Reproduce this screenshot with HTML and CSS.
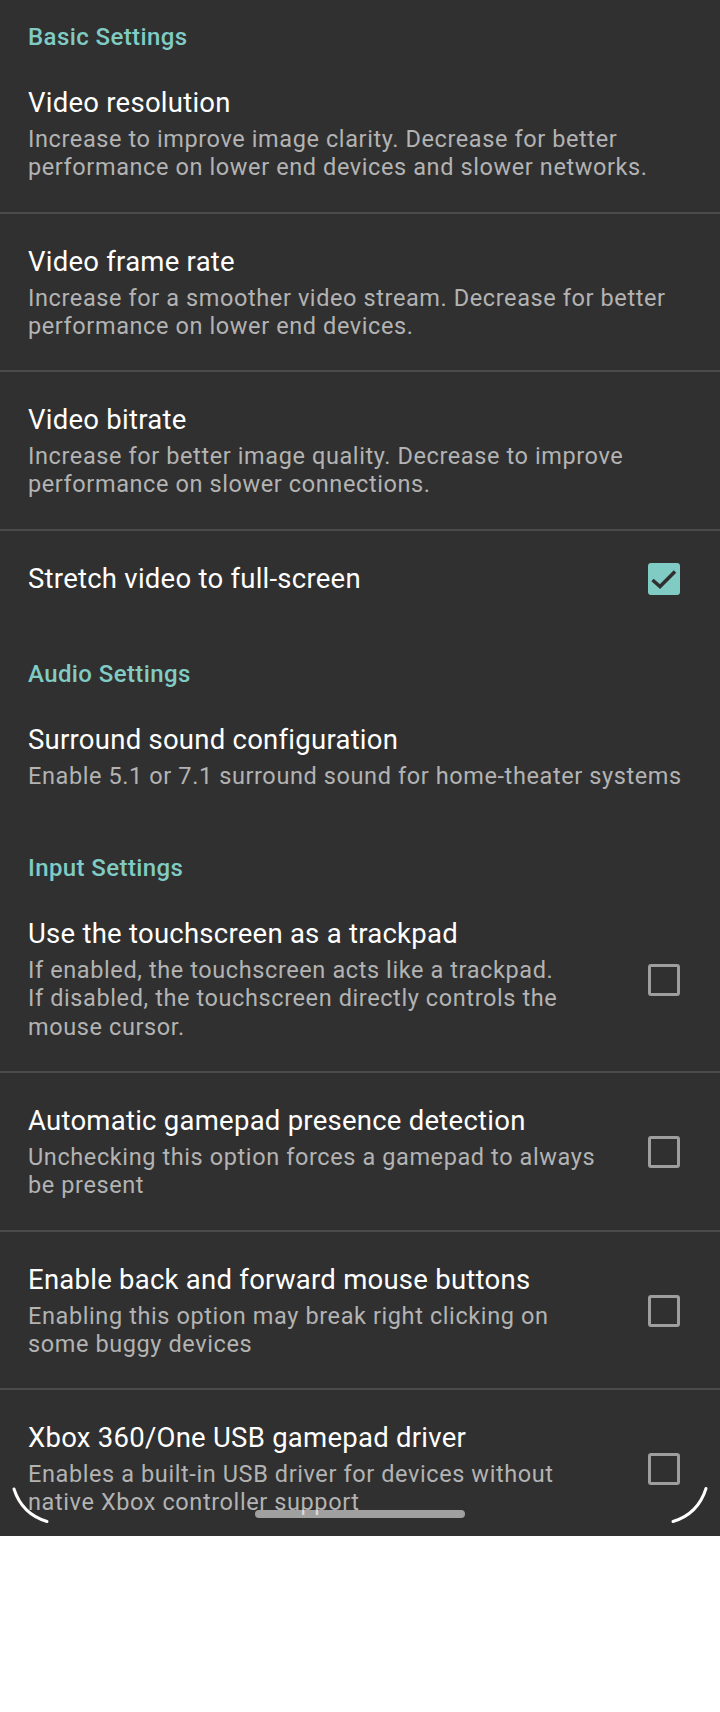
FILE: index.html
```html
<!DOCTYPE html>
<html lang="en">
<head>
<meta charset="utf-8">
<title>Settings</title>
<link rel="stylesheet" href="styles.css">
</head>
<body>
<div class="screen">
  <div class="list">
    <div class="category first">Basic Settings</div>
    <div class="group">
      <div class="pref">
        <div class="text">
          <div class="title">Video resolution</div>
          <div class="summary">Increase to improve image clarity. Decrease for better performance on lower end devices and slower networks.</div>
        </div>
      </div>
      <div class="pref">
        <div class="text">
          <div class="title">Video frame rate</div>
          <div class="summary">Increase for a smoother video stream. Decrease for better performance on lower end devices.</div>
        </div>
      </div>
      <div class="pref">
        <div class="text">
          <div class="title">Video bitrate</div>
          <div class="summary">Increase for better image quality. Decrease to improve performance on slower connections.</div>
        </div>
      </div>
      <div class="pref widget single">
        <div class="text">
          <div class="title">Stretch video to full-screen</div>
        </div>
        <svg class="check" viewBox="0 0 32 32" width="32" height="32" aria-hidden="true">
          <rect x="0" y="0" width="32" height="32" rx="3" fill="#80cbc4"/>
          <polyline points="4.5,17 12,23.5 27,8.5" fill="none" stroke="#2f2f2f" stroke-width="3.5"/>
        </svg>
      </div>
    </div>

    <div class="category">Audio Settings</div>
    <div class="group">
      <div class="pref">
        <div class="text">
          <div class="title">Surround sound configuration</div>
          <div class="summary">Enable 5.1 or 7.1 surround sound for home-theater systems</div>
        </div>
      </div>
    </div>

    <div class="category">Input Settings</div>
    <div class="group">
      <div class="pref widget">
        <div class="text">
          <div class="title">Use the touchscreen as a trackpad</div>
          <div class="summary">If enabled, the touchscreen acts like a trackpad.<br>If disabled, the touchscreen directly controls the mouse cursor.</div>
        </div>
        <div class="box"></div>
      </div>
      <div class="pref widget">
        <div class="text">
          <div class="title">Automatic gamepad presence detection</div>
          <div class="summary">Unchecking this option forces a gamepad to always be present</div>
        </div>
        <div class="box"></div>
      </div>
      <div class="pref widget">
        <div class="text">
          <div class="title">Enable back and forward mouse buttons</div>
          <div class="summary">Enabling this option may break right clicking on some buggy devices</div>
        </div>
        <div class="box"></div>
      </div>
      <div class="pref widget">
        <div class="text">
          <div class="title">Xbox 360/One USB gamepad driver</div>
          <div class="summary">Enables a built-in USB driver for devices without native Xbox controller support</div>
        </div>
        <div class="box"></div>
      </div>
    </div>
  </div>

  <div class="pill"></div>
  <svg class="corners" viewBox="0 1480 720 56" width="720" height="56" aria-hidden="true">
    <path d="M14 1489 Q22 1514 47 1521.5" fill="none" stroke="#ffffff" stroke-width="3" stroke-linecap="round"/>
    <path d="M706 1488.5 Q698 1514 673 1521.5" fill="none" stroke="#ffffff" stroke-width="3" stroke-linecap="round"/>
  </svg>
</div>
</body>
</html>
```

FILE: styles.css
```css
* {
  box-sizing: border-box;
}

html, body {
  margin: 0;
  padding: 0;
  background: #ffffff;
}

body {
  font-family: Roboto, "Noto Sans", "Liberation Sans", sans-serif;
}

.screen {
  position: relative;
  width: 720px;
  height: 1536px;
  background: #303030;
  overflow: hidden;
}

.list {
  display: flex;
  flex-direction: column;
}

.category {
  padding: 33.5px 28px 4px 28px;
  font-size: 24px;
  line-height: 28px;
  font-weight: 500;
  letter-spacing: 0.4px;
  color: #80cbc4;
}

.category.first {
  padding-top: 23px;
}

.group {
  display: flex;
  flex-direction: column;
}

.pref {
  display: flex;
  align-items: center;
  padding: 32px 27px 30px 28px;
}

.pref + .pref {
  border-top: 2px solid #4b4b4b;
}

.pref.widget {
  padding-right: 40px;
  gap: 44px;
}

.pref.single {
  padding-top: 32.5px;
  padding-bottom: 31.5px;
}

.text {
  flex: 1;
  min-width: 0;
}

.title {
  font-size: 27.5px;
  line-height: 32px;
  letter-spacing: 0.25px;
  color: #ffffff;
}

.summary {
  margin-top: 6px;
  font-size: 23.5px;
  line-height: 28.3px;
  letter-spacing: 0.6px;
  color: #b3b3b3;
}

.check {
  flex: none;
  display: block;
}

.box {
  flex: none;
  width: 32px;
  height: 32px;
  border: 3px solid #9e9e9e;
  border-radius: 3px;
}

.pill {
  position: absolute;
  left: 255px;
  top: 1510px;
  width: 210px;
  height: 7.5px;
  border-radius: 4px;
  background: rgba(255, 255, 255, 0.54);
}

.corners {
  position: absolute;
  left: 0;
  top: 1480px;
  display: block;
}
```
